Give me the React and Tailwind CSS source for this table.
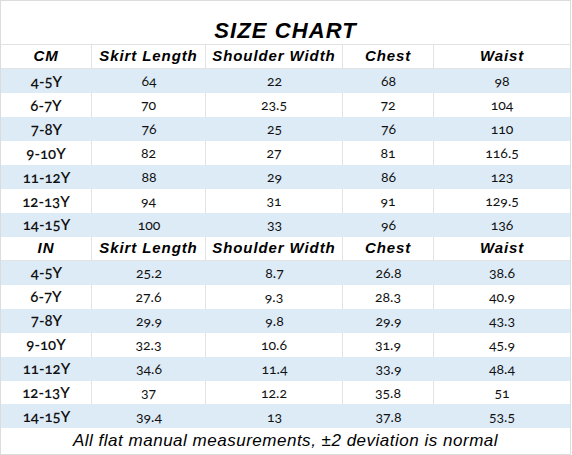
import React from "react";

const cm = [
  ["4-5Y", "64", "22", "68", "98"],
  ["6-7Y", "70", "23.5", "72", "104"],
  ["7-8Y", "76", "25", "76", "110"],
  ["9-10Y", "82", "27", "81", "116.5"],
  ["11-12Y", "88", "29", "86", "123"],
  ["12-13Y", "94", "31", "91", "129.5"],
  ["14-15Y", "100", "33", "96", "136"],
];

const inch = [
  ["4-5Y", "25.2", "8.7", "26.8", "38.6"],
  ["6-7Y", "27.6", "9.3", "28.3", "40.9"],
  ["7-8Y", "29.9", "9.8", "29.9", "43.3"],
  ["9-10Y", "32.3", "10.6", "31.9", "45.9"],
  ["11-12Y", "34.6", "11.4", "33.9", "48.4"],
  ["12-13Y", "37", "12.2", "35.8", "51"],
  ["14-15Y", "39.4", "13", "37.8", "53.5"],
];

const cols = "grid grid-cols-[91px_114px_137px_91px_136px]";
const hand = "font-['Liberation_Sans',Arial,sans-serif] italic font-bold";
const num = "font-['Lato','Noto_Sans',sans-serif] oldstyle-nums";

const HeaderRow = ({ unit }) => (
  <div className={`${cols} h-6 bg-white border-b border-[#e3e3e3] text-[15px] text-black tracking-[0.06em] ${hand}`}>
    {[unit, "Skirt Length", "Shoulder Width", "Chest", "Waist"].map((h, i) => (
      <div
        key={h}
        className={`flex items-center justify-center ${i < 4 ? "border-r border-[#e3e3e3]" : ""}`}
      >
        {h}
      </div>
    ))}
  </div>
);

const DataRows = ({ rows }) =>
  rows.map((r, idx) => {
    const blue = idx % 2 === 0;
    return (
      <div
        key={r[0]}
        className={`${cols} h-6 ${blue ? "bg-[#ddebf7]" : "bg-white"} text-[#111]`}
      >
        {r.map((v, i) => (
          <div
            key={i}
            className={`flex items-center justify-center ${
              !blue && i < 4 ? "border-r border-[#e3e3e3]" : ""
            } ${i === 0 ? `text-[15px] font-semibold ${num}` : `text-[14px] ${num}`}`}
          >
            {v}
          </div>
        ))}
      </div>
    );
  });

export default function App() {
  return (
    <div className="w-[571px] h-[455px] bg-white border border-[#dcdcdc] flex flex-col">
      <div className={`h-[44px] flex items-end justify-center pb-[2px] leading-none border-b border-[#e3e3e3] text-[22px] tracking-[0.05em] text-black ${hand}`}>
        SIZE CHART
      </div>
      <HeaderRow unit="CM" />
      <DataRows rows={cm} />
      <HeaderRow unit="IN" />
      <DataRows rows={inch} />
      <div className="flex-1 flex items-center justify-center text-[17px] tracking-[0.03em] text-black font-['Liberation_Sans',Arial,sans-serif] italic">
        All flat manual measurements, ±2 deviation is normal
      </div>
    </div>
  );
}
